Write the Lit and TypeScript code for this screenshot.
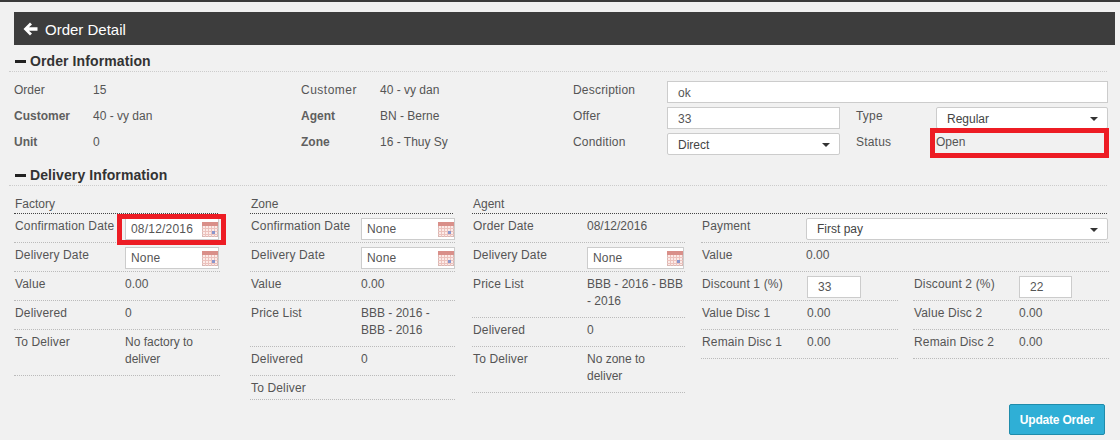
import { LitElement, html, css, svg } from 'lit';
import { customElement } from 'lit/decorators.js';

const calendar = html`<svg class="cal" width="16" height="15" viewBox="0 0 16 15">
  <rect x="0.5" y="0.5" width="15" height="14" fill="#fcebe8" stroke="#d8b8b4" />
  <rect x="0" y="0" width="16" height="4" fill="#d98f89" />
  ${[3, 6, 9, 12].map((x) => svg`<line x1=${x + 0.5} y1="4" x2=${x + 0.5} y2="15" stroke="#ecc2bd" />`)}
  ${[6, 9, 12].map((y) => svg`<line x1="0" y1=${y + 0.5} x2="16" y2=${y + 0.5} stroke="#ecc2bd" />`)}
  <rect x="10" y="9" width="3" height="3" fill="#8a96cc" />
</svg>`;

const caret = html`<i class="caret"></i>`;

@customElement('app-root')
export class AppRoot extends LitElement {
  static styles = css`
    :host {
      display: block;
      width: 1120px;
      height: 440px;
      overflow: hidden;
      background: #f1f1f1;
      color: #555;
      font: 12px/17px 'Liberation Sans', Arial, sans-serif;
    }
    .topline {
      height: 2px;
      background: #3b3b3b;
    }
    .page {
      padding: 10px 5px 0 14px;
    }
    .header {
      display: flex;
      align-items: center;
      gap: 7px;
      height: 33px;
      padding-left: 9px;
      background: #3d3d3d;
      color: #fff;
      font-size: 15px;
    }
    .header span {
      padding-top: 2px;
    }
    .section {
      display: flex;
      align-items: flex-end;
      gap: 4px;
      height: 25px;
      margin: 0 8px 0 -5px;
      padding: 0 0 1px 6px;
      border-bottom: 1px dotted #ccc;
      color: #333;
      font-size: 14px;
      font-weight: bold;
      letter-spacing: 0.1px;
    }
    .section i {
      width: 11px;
      height: 3px;
      margin-bottom: 7px;
      background: #222;
    }
    .order {
      display: grid;
      grid-template-columns: 287px 272px 1fr;
      height: 87px;
      margin-right: 7px;
      padding-top: 10px;
      box-sizing: border-box;
    }
    .kv {
      display: grid;
      grid-template-columns: 79px 1fr;
      grid-auto-rows: 26px;
    }
    .kv .key {
      letter-spacing: 0.5px;
    }
    .kv b {
      color: #5f5f5f;
    }
    .form {
      display: grid;
      grid-template-columns: 94px 173px 16px 80px 172px;
      grid-auto-rows: 26px;
      align-items: start;
    }
    .form .wide {
      grid-column: 2 / 6;
    }
    .form label {
      letter-spacing: 0.2px;
    }
    .form label.indent {
      grid-column: 4;
    }
    .input,
    .select {
      display: flex;
      align-items: center;
      justify-content: space-between;
      box-sizing: border-box;
      height: 22px;
      padding: 2px 5px 0 10px;
      background: #fff;
      border: 1px solid #ccc;
      white-space: nowrap;
    }
    .form .input,
    .form .select {
      margin-top: -1px;
    }
    .select {
      border-radius: 2px;
      color: #444;
    }
    .caret {
      width: 0;
      height: 0;
      margin-right: 4px;
      border: 4px solid transparent;
      border-top-color: #333;
      border-bottom: 0;
    }
    .status {
      grid-column: 5;
    }
    .delivery {
      display: grid;
      grid-template-columns: 206px 205px 637px;
      column-gap: 31px;
      padding-top: 10px;
    }
    .delivery > :nth-child(2) {
      margin: 0 1px 0 -1px;
    }
    .delivery > :nth-child(3) {
      margin: 0 15px 0 -15px;
    }
    .group-title {
      height: 17px;
      margin-right: 2px;
      padding-left: 1px;
      border-bottom: 1px dotted #444;
    }
    .rows {
      display: flex;
      flex-direction: column;
    }
    .row {
      display: grid;
      grid-template-columns: 110px 1fr;
      box-sizing: border-box;
      min-height: 29px;
      padding: 4px 0 7px 1px;
      border-bottom: 1px dotted #bbb;
    }
    .row.empty {
      min-height: 24px;
      padding-bottom: 2px;
    }
    .row > span:first-child {
      letter-spacing: 0.15px;
      white-space: nowrap;
    }
    .row .input,
    .row .select {
      margin-bottom: -5px;
      padding-top: 1px;
    }
    .row .input {
      width: 94px;
      padding-left: 5px;
      padding-right: 0;
      letter-spacing: 0.2px;
    }
    .agent {
      display: grid;
      grid-template-columns: 213px 408px;
      column-gap: 16px;
    }
    .agent .row {
      grid-template-columns: 114px 1fr;
    }
    .agent .row .input {
      width: 97px;
    }
    .pay .row {
      grid-template-columns: 104px 1fr;
    }
    .pay .row .select {
      width: 302px;
      padding-left: 10px;
    }
    .pay .split {
      display: grid;
      grid-template-columns: 197px 196px;
      column-gap: 15px;
    }
    .pay .split .row {
      grid-template-columns: 105px 1fr;
    }
    .pay .split .input {
      width: 54px;
      padding-left: 10px;
    }
    .pay .split .rows:last-child .input {
      width: 53px;
    }
    .actions {
      display: flex;
      justify-content: flex-end;
      padding: 4px 10px 0 0;
    }
    .btn {
      box-sizing: border-box;
      width: 96px;
      height: 31px;
      background: #2fafd6;
      border: 1px solid #1f8cab;
      border-radius: 2px;
      color: #fff;
      font: bold 12px 'Liberation Sans', Arial, sans-serif;
      letter-spacing: -0.2px;
    }
    .stage {
      position: relative;
    }
    .mark {
      position: absolute;
      box-sizing: border-box;
      border: 5px solid #ed1c24;
    }
    .mark.status-mark {
      left: 930px;
      top: 128px;
      width: 179px;
      height: 30px;
    }
    .mark.date-mark {
      left: 117px;
      top: 214px;
      width: 109px;
      height: 31px;
    }
  `;

  private row(label: string, value: unknown) {
    return html`<div class="row ${value === '' ? 'empty' : ''}"><span>${label}</span><span>${value}</span></div>`;
  }

  private dateInput(value: string) {
    return html`<div class="input"><span>${value}</span>${calendar}</div>`;
  }

  render() {
    return html`
      <div class="stage">
        <div class="topline"></div>
        <div class="page">
          <div class="header">
            <svg width="15" height="14" viewBox="0 0 15 14">
              <path d="M7 0.5 L0.5 7 L7 13.5 L9 11.5 L6 8.7 H14.5 V5.3 H6 L9 2.5 Z" fill="#fff" />
            </svg>
            <span>Order Detail</span>
          </div>
          <div class="section"><i></i>Order Information</div>
          <div class="order">
            <div class="kv">
              <span>Order</span><span>15</span>
              <b>Customer</b><span>40 - vy dan</span>
              <b>Unit</b><span>0</span>
            </div>
            <div class="kv">
              <span class="key">Customer</span><span>40 - vy dan</span>
              <b>Agent</b><span>BN - Berne</span>
              <b>Zone</b><span>16 - Thuy Sy</span>
            </div>
            <div class="form">
              <label>Description</label>
              <div class="input wide">ok</div>
              <label>Offer</label>
              <div class="input">33</div>
              <label class="indent">Type</label>
              <div class="select">Regular${caret}</div>
              <label>Condition</label>
              <div class="select">Direct${caret}</div>
              <label class="indent">Status</label>
              <span class="status">Open</span>
            </div>
          </div>
          <div class="section"><i></i>Delivery Information</div>
          <div class="delivery">
            <div>
              <div class="group-title">Factory</div>
              <div class="rows">
                ${this.row('Confirmation Date', this.dateInput('08/12/2016'))}
                ${this.row('Delivery Date', this.dateInput('None'))}
                ${this.row('Value', '0.00')}
                ${this.row('Delivered', '0')}
                ${this.row('To Deliver', 'No factory to deliver')}
              </div>
            </div>
            <div>
              <div class="group-title">Zone</div>
              <div class="rows">
                ${this.row('Confirmation Date', this.dateInput('None'))}
                ${this.row('Delivery Date', this.dateInput('None'))}
                ${this.row('Value', '0.00')}
                ${this.row('Price List', 'BBB - 2016 - BBB - 2016')}
                ${this.row('Delivered', '0')}
                ${this.row('To Deliver', '')}
              </div>
            </div>
            <div>
              <div class="group-title">Agent</div>
              <div class="agent">
                <div class="rows">
                  ${this.row('Order Date', '08/12/2016')}
                  ${this.row('Delivery Date', this.dateInput('None'))}
                  ${this.row('Price List', 'BBB - 2016 - BBB - 2016')}
                  ${this.row('Delivered', '0')}
                  ${this.row('To Deliver', html`No zone to<br />deliver`)}
                </div>
                <div class="pay">
                  ${this.row('Payment', html`<div class="select">First pay${caret}</div>`)}
                  ${this.row('Value', '0.00')}
                  <div class="split">
                    <div class="rows">
                      ${this.row('Discount 1 (%)', html`<div class="input">33</div>`)}
                      ${this.row('Value Disc 1', '0.00')}
                      ${this.row('Remain Disc 1', '0.00')}
                    </div>
                    <div class="rows">
                      ${this.row('Discount 2 (%)', html`<div class="input">22</div>`)}
                      ${this.row('Value Disc 2', '0.00')}
                      ${this.row('Remain Disc 2', '0.00')}
                    </div>
                  </div>
                </div>
              </div>
            </div>
          </div>
          <div class="actions"><button class="btn">Update Order</button></div>
        </div>
        <div class="mark status-mark"></div>
        <div class="mark date-mark"></div>
      </div>
    `;
  }
}
